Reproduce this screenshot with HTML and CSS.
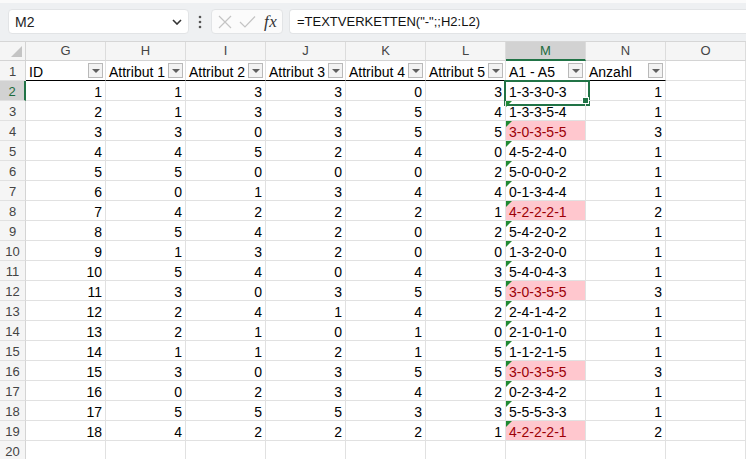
FILE: index.html
```html
<!DOCTYPE html>
<html lang="de">
<head>
<meta charset="utf-8">
<title>Excel</title>
<link rel="stylesheet" href="styles.css">
</head>
<body>
<div class="fbar">
  <div class="namebox"><span>M2</span>
    <svg class="chev" width="10" height="6" viewBox="0 0 10 6"><path d="M1 1 L5 5 L9 1" fill="none" stroke="#333" stroke-width="1.6"/></svg>
  </div>
  <div class="dots"><svg width="4" height="14" viewBox="0 0 4 14"><circle cx="2" cy="2" r="1.3" fill="#555"/><circle cx="2" cy="7" r="1.3" fill="#555"/><circle cx="2" cy="12" r="1.3" fill="#555"/></svg></div>
  <div class="fxbox">
    <svg width="14" height="14" viewBox="0 0 14 14"><path d="M1 1 L13 13 M13 1 L1 13" stroke="#c4c4c4" stroke-width="1.2" fill="none"/></svg>
    <svg width="17" height="14" viewBox="0 0 17 14"><path d="M1 7 L6 12 L16 1.5" stroke="#c4c4c4" stroke-width="1.2" fill="none"/></svg>
    <span class="fx">fx</span>
  </div>
  <div class="formula">=TEXTVERKETTEN("-";;H2:L2)</div>
</div>

<div class="sheet">
  <div class="corner"><span class="tri"></span></div>
  <div class="h">G</div><div class="h">H</div><div class="h">I</div><div class="h">J</div><div class="h">K</div><div class="h">L</div><div class="h hs">M</div><div class="h">N</div><div class="h">O</div>

  <div class="r">1</div>
  <div class="c t1">ID<span class="fb"></span></div><div class="c t1">Attribut 1<span class="fb"></span></div><div class="c t1">Attribut 2<span class="fb"></span></div><div class="c t1">Attribut 3<span class="fb"></span></div><div class="c t1">Attribut 4<span class="fb"></span></div><div class="c t1">Attribut 5<span class="fb"></span></div><div class="c t1">A1 - A5<span class="fb"></span></div><div class="c t1">Anzahl<span class="fb"></span></div><div class="c"></div>

  <div class="r rs">2</div>
  <div class="c n">1</div><div class="c n">1</div><div class="c n">3</div><div class="c n">3</div><div class="c n">0</div><div class="c n">3</div><div class="c sel">1-3-3-0-3<span class="handle"></span></div><div class="c n">1</div><div class="c"></div>

  <div class="r">3</div>
  <div class="c n">2</div><div class="c n">1</div><div class="c n">3</div><div class="c n">3</div><div class="c n">5</div><div class="c n">4</div><div class="c g">1-3-3-5-4</div><div class="c n">1</div><div class="c"></div>

  <div class="r">4</div>
  <div class="c n">3</div><div class="c n">3</div><div class="c n">0</div><div class="c n">3</div><div class="c n">5</div><div class="c n">5</div><div class="c g p">3-0-3-5-5</div><div class="c n">3</div><div class="c"></div>

  <div class="r">5</div>
  <div class="c n">4</div><div class="c n">4</div><div class="c n">5</div><div class="c n">2</div><div class="c n">4</div><div class="c n">0</div><div class="c g">4-5-2-4-0</div><div class="c n">1</div><div class="c"></div>

  <div class="r">6</div>
  <div class="c n">5</div><div class="c n">5</div><div class="c n">0</div><div class="c n">0</div><div class="c n">0</div><div class="c n">2</div><div class="c g">5-0-0-0-2</div><div class="c n">1</div><div class="c"></div>

  <div class="r">7</div>
  <div class="c n">6</div><div class="c n">0</div><div class="c n">1</div><div class="c n">3</div><div class="c n">4</div><div class="c n">4</div><div class="c g">0-1-3-4-4</div><div class="c n">1</div><div class="c"></div>

  <div class="r">8</div>
  <div class="c n">7</div><div class="c n">4</div><div class="c n">2</div><div class="c n">2</div><div class="c n">2</div><div class="c n">1</div><div class="c g p">4-2-2-2-1</div><div class="c n">2</div><div class="c"></div>

  <div class="r">9</div>
  <div class="c n">8</div><div class="c n">5</div><div class="c n">4</div><div class="c n">2</div><div class="c n">0</div><div class="c n">2</div><div class="c g">5-4-2-0-2</div><div class="c n">1</div><div class="c"></div>

  <div class="r">10</div>
  <div class="c n">9</div><div class="c n">1</div><div class="c n">3</div><div class="c n">2</div><div class="c n">0</div><div class="c n">0</div><div class="c g">1-3-2-0-0</div><div class="c n">1</div><div class="c"></div>

  <div class="r">11</div>
  <div class="c n">10</div><div class="c n">5</div><div class="c n">4</div><div class="c n">0</div><div class="c n">4</div><div class="c n">3</div><div class="c g">5-4-0-4-3</div><div class="c n">1</div><div class="c"></div>

  <div class="r">12</div>
  <div class="c n">11</div><div class="c n">3</div><div class="c n">0</div><div class="c n">3</div><div class="c n">5</div><div class="c n">5</div><div class="c g p">3-0-3-5-5</div><div class="c n">3</div><div class="c"></div>

  <div class="r">13</div>
  <div class="c n">12</div><div class="c n">2</div><div class="c n">4</div><div class="c n">1</div><div class="c n">4</div><div class="c n">2</div><div class="c g">2-4-1-4-2</div><div class="c n">1</div><div class="c"></div>

  <div class="r">14</div>
  <div class="c n">13</div><div class="c n">2</div><div class="c n">1</div><div class="c n">0</div><div class="c n">1</div><div class="c n">0</div><div class="c g">2-1-0-1-0</div><div class="c n">1</div><div class="c"></div>

  <div class="r">15</div>
  <div class="c n">14</div><div class="c n">1</div><div class="c n">1</div><div class="c n">2</div><div class="c n">1</div><div class="c n">5</div><div class="c g">1-1-2-1-5</div><div class="c n">1</div><div class="c"></div>

  <div class="r">16</div>
  <div class="c n">15</div><div class="c n">3</div><div class="c n">0</div><div class="c n">3</div><div class="c n">5</div><div class="c n">5</div><div class="c g p">3-0-3-5-5</div><div class="c n">3</div><div class="c"></div>

  <div class="r">17</div>
  <div class="c n">16</div><div class="c n">0</div><div class="c n">2</div><div class="c n">3</div><div class="c n">4</div><div class="c n">2</div><div class="c g">0-2-3-4-2</div><div class="c n">1</div><div class="c"></div>

  <div class="r">18</div>
  <div class="c n">17</div><div class="c n">5</div><div class="c n">5</div><div class="c n">5</div><div class="c n">3</div><div class="c n">3</div><div class="c g">5-5-5-3-3</div><div class="c n">1</div><div class="c"></div>

  <div class="r">19</div>
  <div class="c n">18</div><div class="c n">4</div><div class="c n">2</div><div class="c n">2</div><div class="c n">2</div><div class="c n">1</div><div class="c g p">4-2-2-2-1</div><div class="c n">2</div><div class="c"></div>

  <div class="r">20</div>
  <div class="c"></div><div class="c"></div><div class="c"></div><div class="c"></div><div class="c"></div><div class="c"></div><div class="c"></div><div class="c"></div><div class="c"></div>
</div>
</body>
</html>
```

FILE: styles.css
```css
* { box-sizing: border-box; }
html, body { margin: 0; padding: 0; }
body {
  width: 746px;
  height: 459px;
  overflow: hidden;
  background: #ffffff;
  font-family: "Liberation Sans", Arial, sans-serif;
  color: #000;
}

.fbar {
  height: 42px;
  background: #eef0f2;
  border-top: 3px solid #fafafa;
  border-bottom: 1px solid #d6d6d6;
  display: flex;
  align-items: flex-start;
  padding: 6px 0 0 8px;
}
.namebox {
  width: 181px;
  height: 25px;
  background: #fff;
  border-radius: 4px;
  border: 1px solid #e2e4e6;
  display: flex;
  align-items: center;
  justify-content: space-between;
  padding: 0 6px 0 6px;
  font-size: 14px;
  color: #222;
}
.chev { margin-top: 1px; }
.dots {
  width: 22px;
  height: 25px;
  display: flex;
  align-items: center;
  justify-content: center;
}
.fxbox {
  width: 72px;
  height: 25px;
  background: #fbfbfb;
  border: 1px solid #e2e4e6;
  border-radius: 4px;
  display: flex;
  align-items: center;
  padding-left: 6px;
  gap: 7px;
}
.fx {
  font-family: "Liberation Serif", "DejaVu Serif", serif;
  font-style: italic;
  font-size: 17px;
  color: #333;
  margin-left: 1px;
  letter-spacing: 0.5px;
}
.formula {
  flex: 1;
  height: 25px;
  margin-left: 6px;
  background: #fff;
  border: 1px solid #e2e4e6;
  border-right: none;
  border-radius: 4px 0 0 4px;
  font-size: 13px;
  line-height: 23px;
  padding-left: 7px;
  color: #111;
}

.sheet {
  display: grid;
  grid-template-columns: 26px repeat(9, 80px);
  grid-template-rows: 19px;
  grid-auto-rows: 20px;
}
.corner {
  background: #f5f5f5;
  border-right: 1px solid #d4d4d4;
  border-bottom: 1px solid #d4d4d4;
  position: relative;
}
.tri {
  position: absolute;
  right: 3px;
  bottom: 3px;
  width: 0;
  height: 0;
  border-left: 11px solid transparent;
  border-bottom: 11px solid #c4c4c4;
}
.h {
  background: #f5f5f5;
  border-right: 1px solid #dcdcdc;
  border-bottom: 1px solid #d4d4d4;
  text-align: center;
  font-size: 13px;
  line-height: 18px;
  color: #444;
}
.hs {
  background: #d2d2d2;
  color: #1d6b3d;
  border-bottom: 2px solid #217346;
  line-height: 17px;
}
.r {
  background: #f5f5f5;
  border-right: 1px solid #d4d4d4;
  border-bottom: 1px solid #e1e1e1;
  text-align: center;
  font-size: 13px;
  padding-top: 3px;
  line-height: 16px;
  color: #444;
}
.rs {
  background: #d2d2d2;
  color: #1d6b3d;
  border-right: 2px solid #217346;
}
.c {
  position: relative;
  border-right: 1px solid #e1e1e1;
  border-bottom: 1px solid #e1e1e1;
  font-size: 14px;
  padding: 3px 3px 0 3px;
  line-height: 16px;
  white-space: nowrap;
}
.n { text-align: right; }
.t1 { border-bottom: 1px solid #000; }
.fb {
  position: absolute;
  right: 2px;
  top: 2px;
  width: 15px;
  height: 15px;
  background: #f3f3f3;
  border: 1px solid #b9b9b9;
}
.fb::after {
  content: "";
  position: absolute;
  left: 3px;
  top: 5px;
  border-left: 4px solid transparent;
  border-right: 4px solid transparent;
  border-top: 4px solid #5f5f5f;
}
.g::before {
  content: "";
  position: absolute;
  left: 0;
  top: 0;
  border-top: 6px solid #1e8a32;
  border-right: 6px solid transparent;
}
.p {
  background: #ffc7ce;
  color: #9c0006;
}
.sel::after {
  content: "";
  position: absolute;
  left: -2px;
  top: -1px;
  width: 82px;
  height: 22px;
  border: 2px solid #217346;
}
.handle {
  position: absolute;
  right: -4px;
  bottom: -4px;
  width: 7px;
  height: 7px;
  background: #217346;
  border: 1px solid #fff;
  z-index: 2;
}
```
